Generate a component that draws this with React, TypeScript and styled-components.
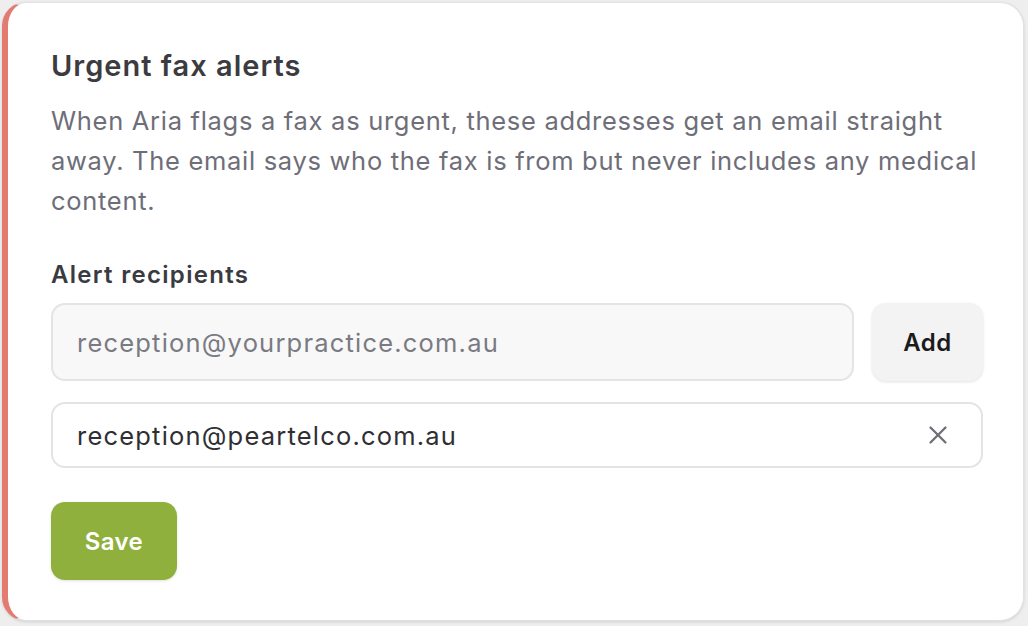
import React, { useState } from 'react';
import styled, { createGlobalStyle } from 'styled-components';
import { X } from 'lucide-react';

const GlobalStyle = createGlobalStyle`
  html, body {
    margin: 0;
    height: 626px;
    background: #eeeeee;
  }
  body {
    padding: 2px 4px 5px 2px;
    box-sizing: border-box;
    font-family: Inter, "Noto Sans", "Liberation Sans", sans-serif;
  }
  #root {
    height: 100%;
  }
`;

const Card = styled.section`
  box-sizing: border-box;
  height: 100%;
  background: #ffffff;
  border: 1px solid #e2e2e2;
  border-left: 6px solid #e27c70;
  border-radius: 24px;
  box-shadow: 0 1px 3px rgba(0, 0, 0, 0.12);
  padding: 45px 40px 0 43px;
  display: flex;
  flex-direction: column;
`;

const Title = styled.h2`
  margin: 0;
  font-size: 29px;
  line-height: 36px;
  font-weight: 600;
  color: #3b3b40;
  letter-spacing: 1px;
`;

const Description = styled.p`
  margin: 17px 0 0;
  font-size: 25.5px;
  line-height: 40px;
  color: #6e6e78;
  letter-spacing: 0.7px;
`;

const Label = styled.label`
  margin-top: 38px;
  font-size: 24px;
  line-height: 32px;
  font-weight: 600;
  color: #3a3a3f;
  letter-spacing: 1.3px;
`;

const AddRow = styled.div`
  margin-top: 12px;
  display: flex;
  gap: 18px;
`;

const EmailInput = styled.input`
  flex: 1;
  min-width: 0;
  height: 78px;
  box-sizing: border-box;
  padding: 0 24px;
  border: 2px solid #e4e4e4;
  border-radius: 14px;
  background: #f8f8f8;
  font: inherit;
  font-size: 25.5px;
  letter-spacing: 1.2px;
  color: #2f2f33;
  outline: none;
  &::placeholder {
    color: #7a7a82;
  }
`;

const Button = styled.button<{ $variant: 'neutral' | 'primary' }>`
  height: 78px;
  border: none;
  border-radius: 14px;
  font: inherit;
  font-size: 24px;
  font-weight: 600;
  letter-spacing: 0.4px;
  cursor: pointer;
  background: ${(p) => (p.$variant === 'primary' ? '#8fb03d' : '#f3f3f3')};
  color: ${(p) => (p.$variant === 'primary' ? '#ffffff' : '#1b1b1b')};
  box-shadow: 0 1px 3px rgba(0, 0, 0, 0.12);
`;

const AddButton = styled(Button)`
  width: 111px;
`;

const SaveButton = styled(Button)`
  width: 126px;
  margin-top: 34px;
  align-self: flex-start;
`;

const RecipientList = styled.ul`
  list-style: none;
  margin: 21px 0 0;
  padding: 0;
  display: flex;
  flex-direction: column;
  gap: 12px;
`;

const Recipient = styled.li`
  box-sizing: border-box;
  height: 66px;
  display: flex;
  align-items: center;
  justify-content: space-between;
  padding: 0 28px 0 24px;
  border: 2px solid #e4e4e4;
  border-radius: 14px;
  font-size: 25.5px;
  letter-spacing: 1.2px;
  color: #2f2f33;
`;

const RemoveButton = styled.button`
  border: none;
  background: none;
  padding: 0;
  display: flex;
  color: #6e6e78;
  cursor: pointer;
`;

const App: React.FC = () => {
  const [draft, setDraft] = useState('');
  const [recipients, setRecipients] = useState<string[]>([
    'reception@peartelco.com.au',
  ]);

  const add = () => {
    if (!draft.trim()) return;
    setRecipients([...recipients, draft.trim()]);
    setDraft('');
  };

  return (
    <>
      <GlobalStyle />
      <Card>
        <Title>Urgent fax alerts</Title>
        <Description>
          When Aria flags a fax as urgent, these addresses get an email straight
          away. The email says who the fax is from but never includes any
          medical content.
        </Description>
        <Label htmlFor="recipient">Alert recipients</Label>
        <AddRow>
          <EmailInput
            id="recipient"
            placeholder="reception@yourpractice.com.au"
            value={draft}
            onChange={(e) => setDraft(e.target.value)}
          />
          <AddButton $variant="neutral" onClick={add}>
            Add
          </AddButton>
        </AddRow>
        <RecipientList>
          {recipients.map((r) => (
            <Recipient key={r}>
              {r}
              <RemoveButton
                aria-label={`Remove ${r}`}
                onClick={() => setRecipients(recipients.filter((x) => x !== r))}
              >
                <X size={30} strokeWidth={1.8} />
              </RemoveButton>
            </Recipient>
          ))}
        </RecipientList>
        <SaveButton $variant="primary">Save</SaveButton>
      </Card>
    </>
  );
};

export default App;
